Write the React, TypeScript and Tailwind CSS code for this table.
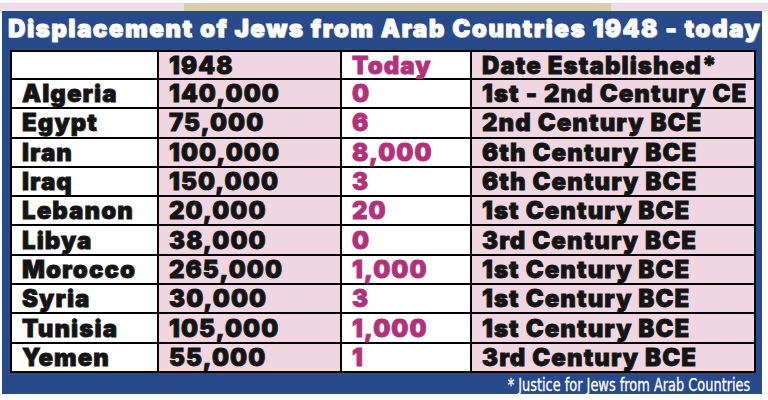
const rows: [string, string, string, string][] = [
  ["Algeria", "140,000", "0", "1st - 2nd Century CE"],
  ["Egypt", "75,000", "6", "2nd Century BCE"],
  ["Iran", "100,000", "8,000", "6th Century BCE"],
  ["Iraq", "150,000", "3", "6th Century BCE"],
  ["Lebanon", "20,000", "20", "1st Century BCE"],
  ["Libya", "38,000", "0", "3rd Century BCE"],
  ["Morocco", "265,000", "1,000", "1st Century BCE"],
  ["Syria", "30,000", "3", "1st Century BCE"],
  ["Tunisia", "105,000", "1,000", "1st Century BCE"],
  ["Yemen", "55,000", "1", "3rd Century BCE"],
]

const cell = "flex items-center pl-2.5 pt-[1px] leading-none text-[24px] font-black tracking-[0.045em] [-webkit-text-stroke:0.8px_currentColor]"
const black = " text-[#141414]"
const magenta = " text-[#b3307a]"

export default function App() {
  return (
    <div className="w-[768px] h-[400px] bg-white flex flex-col" style={{ fontFamily: "Inter, 'Liberation Sans', sans-serif" }}>
      <div className="h-[3px]" />
      <div className="h-[8px] bg-[#efdce4] flex">
        <div className="ml-[184px] w-[427px] bg-[#d8ccb1]" />
      </div>
      <div className="ml-[2px] w-[760px] h-[383px] bg-[#284a8b] flex flex-col">
        <h1 className="h-[39px] pl-[6px] pt-[6px] text-[24px] leading-none font-black text-white tracking-[0.065em] [-webkit-text-stroke:0.8px_white] [text-shadow:1px_1px_0_#8f9ab0] whitespace-nowrap">
          Displacement of Jews from Arab Countries 1948 - today
        </h1>
        <div className="ml-[8px] w-[746px] h-[323px] bg-black p-[2px] grid gap-[2px] grid-cols-[145px_181px_128px_1fr] grid-rows-[26px_repeat(10,1fr)]">
          <div className="bg-white" />
          <div className={cell + black + " bg-[#f0d6e0]"}>1948</div>
          <div className={cell + magenta + " bg-white"}>Today</div>
          <div className={cell + black + " bg-[#f0d6e0]"}>Date Established*</div>
          {rows.map((r) => (
            <>
              <div key={r[0]} className={cell + black + " bg-white"}>{r[0]}</div>
              <div className={cell + black + " bg-[#f0d6e0]"}>{r[1]}</div>
              <div className={cell + magenta + " bg-white"}>{r[2]}</div>
              <div className={cell + black + " bg-[#f0d6e0]"}>{r[3]}</div>
            </>
          ))}
        </div>
        <div className="flex justify-end pr-[12px] pt-[4px]">
          <span className="origin-right scale-x-[0.76] text-[17px] leading-none text-white whitespace-nowrap [-webkit-text-stroke:0.3px_white]" style={{ fontFamily: "'DejaVu Sans', sans-serif" }}>
            * Justice for Jews from Arab Countries
          </span>
        </div>
      </div>
    </div>
  )
}
